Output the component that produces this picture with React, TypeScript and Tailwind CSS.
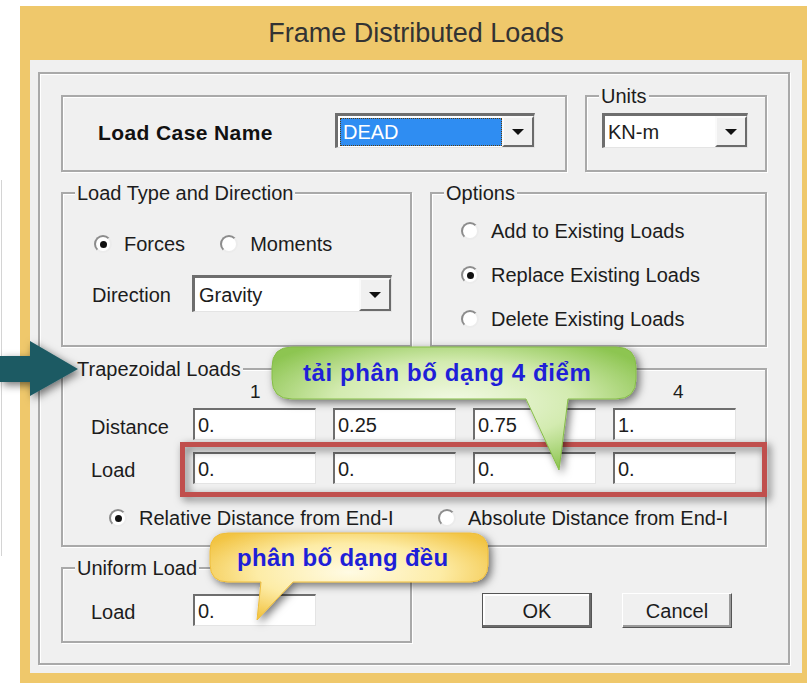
import React from 'react';

// classic sunken edit box
const Field: React.FC<{ value: string }> = ({ value }) => (
  <div className="w-[123px] h-[32px] bg-white border-t-2 border-l-2 border-r border-b border-t-[#6e6e6e] border-l-[#6e6e6e] border-r-[#e4e4e4] border-b-[#e4e4e4] flex items-center pl-[3px] text-[20px] leading-none">
    {value}
  </div>
);

const DropButton: React.FC = () => (
  <div className="w-[32px] h-full shrink-0 bg-[#f0f0f0] border-2 border-t-[#fafafa] border-l-[#fafafa] border-r-[#6b6b6b] border-b-[#6b6b6b] flex items-center justify-center">
    <span className="w-0 h-0 border-l-[6px] border-r-[6px] border-t-[6px] border-l-transparent border-r-transparent border-t-[#111]" />
  </div>
);

const Combo: React.FC<{ className: string; children: React.ReactNode }> = ({ className, children }) => (
  <div className={`bg-white border-t-[3px] border-l-[3px] border-r border-b border-t-[#6e6e6e] border-l-[#6e6e6e] border-r-[#e4e4e4] border-b-[#e4e4e4] flex ${className}`}>
    <div className="flex-1 flex items-center min-w-0">{children}</div>
    <DropButton />
  </div>
);

const Radio: React.FC<{ checked?: boolean }> = ({ checked }) => (
  <span className="w-[18px] h-[18px] shrink-0 rounded-full bg-white border-2 border-t-[#8c8c8c] border-l-[#8c8c8c] border-r-[#ececec] border-b-[#ececec] flex items-center justify-center">
    {checked && <span className="w-[7px] h-[7px] rounded-full bg-[#111]" />}
  </span>
);

const Option: React.FC<{ label: string; checked?: boolean; className?: string }> = ({ label, checked, className = '' }) => (
  <div className={`flex items-center gap-[12px] h-[24px] ${className}`}>
    <Radio checked={checked} />
    <span>{label}</span>
  </div>
);

const GroupBox: React.FC<{ label: string; className: string; children: React.ReactNode }> = ({ label, className, children }) => (
  <div className={`border-2 border-[#a9a9a9] shadow-[inset_1px_1px_0_#fff,1px_1px_0_#fff] ${className}`}>
    <span className="block w-fit -mt-[12px] ml-[12px] px-[2px] bg-[#f0f0f0] leading-[22px]">{label}</span>
    {children}
  </div>
);

const distances = ['0.', '0.25', '0.75', '1.'];
const loads = ['0.', '0.', '0.', '0.'];
// point numbers 2 and 3 sit under the note bubble
const headers = ['1', '', '', '4'];

const App: React.FC = () => {
  return (
    <div className="relative w-[807px] h-[683px] bg-white overflow-hidden font-['Liberation_Sans',Arial,sans-serif] text-[#1c1c1c]">
      <div className="absolute left-[1px] top-[180px] w-[1px] h-[376px] bg-[#d4d4d4]" />

      <div className="pl-[20px] pt-[6px]">
        <div className="w-[787px] h-[677px] bg-[#efc86b] pl-[10px] pr-[5px] pb-[10px] flex flex-col">
          <div className="h-[54px] flex items-center justify-center text-[27px] text-[#333]">Frame Distributed Loads</div>

          <div className="flex-1 flex bg-[#f0f0f0] pt-[12px] pl-[8px] pr-[12px] pb-[8px]">
            <div className="flex-1 flex flex-col border-2 border-[#a9a9a9] shadow-[inset_1px_1px_0_#fff,1px_1px_0_#fff] pl-[21px] pt-[21px] text-[20px] leading-[22px]">
              {/* load case + units */}
              <div className="flex gap-[18px]">
                <div className="w-[506px] h-[77px] flex items-start border-2 border-[#a9a9a9] shadow-[inset_1px_1px_0_#fff,1px_1px_0_#fff]">
                  <span className="ml-[35px] mt-[25px] font-bold text-[21px] tracking-[0.4px] text-[#111]">Load Case Name</span>
                  <Combo className="ml-auto mr-[30px] mt-[16px] w-[200px] h-[35px]">
                    <div className="ml-[2px] h-[28px] w-full flex items-center bg-[#2f8df2] border border-dotted border-[#5a3d10] text-white pl-[2px]">DEAD</div>
                  </Combo>
                </div>
                <GroupBox label="Units" className="w-[182px] h-[77px]">
                  <Combo className="mt-[6px] ml-[15px] w-[146px] h-[35px]">
                    <span className="pl-[3px]">KN-m</span>
                  </Combo>
                </GroupBox>
              </div>

              {/* load type + options */}
              <div className="flex gap-[18px] mt-[20px]">
                <GroupBox label="Load Type and Direction" className="w-[351px] h-[155px]">
                  <div className="flex mt-[28px] ml-[31px]">
                    <Option label="Forces" checked />
                    <Option label="Moments" className="ml-[35px]" />
                  </div>
                  <div className="flex items-center mt-[19px]">
                    <span className="w-[129px] pl-[29px] pt-[2px]">Direction</span>
                    <Combo className="w-[200px] h-[37px]">
                      <span className="pl-[4px]">Gravity</span>
                    </Combo>
                  </div>
                </GroupBox>
                <GroupBox label="Options" className="w-[337px] h-[155px]">
                  <div className="flex flex-col gap-[20px] mt-[15px] ml-[29px]">
                    <Option label="Add to Existing Loads" />
                    <Option label="Replace Existing Loads" checked />
                    <Option label="Delete Existing Loads" />
                  </div>
                </GroupBox>
              </div>

              {/* trapezoidal */}
              <GroupBox label="Trapezoidal Loads" className="w-[706px] h-[179px] mt-[21px]">
                <div className="flex gap-[17px] ml-[130px] mt-[1px] h-[22px]">
                  {headers.map((n, i) => (
                    <span key={i} className={`w-[123px] text-[19px] ${i === 3 ? 'pl-[60px]' : 'pl-[57px]'}`}>{n}</span>
                  ))}
                </div>
                <div className="flex items-center mt-[5px]">
                  <span className="w-[130px] pl-[28px] pt-[6px]">Distance</span>
                  <div className="flex gap-[17px]">
                    {distances.map((d, i) => <Field key={i} value={d} />)}
                  </div>
                </div>
                <div className="flex items-center mt-[12px]">
                  <span className="w-[130px] pl-[28px] pt-[4px]">Load</span>
                  <div className="flex gap-[17px]">
                    {loads.map((d, i) => <Field key={i} value={d} />)}
                  </div>
                </div>
                <div className="flex mt-[22px] ml-[46px]">
                  <Option label="Relative Distance from End-I" checked className="w-[329px]" />
                  <Option label="Absolute Distance from End-I" />
                </div>
              </GroupBox>

              {/* uniform + buttons */}
              <div className="flex items-start mt-[20px]">
                <GroupBox label="Uniform Load" className="w-[351px] h-[76px]">
                  <div className="flex items-center mt-[15px]">
                    <span className="w-[130px] pl-[28px] pt-[3px]">Load</span>
                    <Field value="0." />
                  </div>
                </GroupBox>
                <div className="flex gap-[30px] ml-[70px] mt-[26px]">
                  <button className="w-[110px] h-[35px] bg-[#f0f0f0] border border-[#555] shadow-[inset_-2px_-2px_0_#6b6b6b,inset_2px_2px_0_#fff] flex items-center justify-center">OK</button>
                  <button className="w-[110px] h-[35px] bg-[#f0f0f0] border border-t-[#fff] border-l-[#fff] border-r-[#555] border-b-[#555] shadow-[inset_-2px_-2px_0_#9a9a9a] flex items-center justify-center">Cancel</button>
                </div>
              </div>
            </div>
          </div>
        </div>
      </div>

      {/* notes drawn over the dialog */}
      <svg className="absolute inset-0 pointer-events-none" width="807" height="683" viewBox="0 0 807 683">
        <defs>
          <filter id="sh" x="-20%" y="-40%" width="140%" height="180%">
            <feDropShadow dx="3" dy="3" stdDeviation="4" floodColor="#000" floodOpacity="0.55" />
          </filter>
          <radialGradient id="green" cx="50%" cy="45%" r="60%">
            <stop offset="0%" stopColor="#f3fae6" />
            <stop offset="55%" stopColor="#d3ebb0" />
            <stop offset="100%" stopColor="#8dc551" />
          </radialGradient>
          <radialGradient id="yellow" cx="50%" cy="45%" r="60%">
            <stop offset="0%" stopColor="#fffbe4" />
            <stop offset="55%" stopColor="#fdeca6" />
            <stop offset="100%" stopColor="#f2c443" />
          </radialGradient>
        </defs>

        <path d="M0 356 H30 V341 L78 369 L30 396 V382 H0 Z" fill="#1f5a63" filter="url(#sh)" />

        <rect x="182.5" y="444.5" width="582" height="50" fill="none" stroke="#c0504d" strokeWidth="5" filter="url(#sh)" />

        <path
          d="M292 347 H616 Q636 347 636 367 V379 Q636 399 616 399 H568 L559 470 L526 399 H292 Q272 399 272 379 V367 Q272 347 292 347 Z"
          fill="url(#green)"
          stroke="#86bd48"
          strokeWidth="1"
          filter="url(#sh)"
        />
        <path
          d="M228 533 H470 Q488 533 488 551 V564 Q488 582 470 582 H293 L257 620 L261 582 H228 Q210 582 210 564 V551 Q210 533 228 533 Z"
          fill="url(#yellow)"
          stroke="#eebd3c"
          strokeWidth="1"
          filter="url(#sh)"
        />
      </svg>

      <span className="absolute left-[303px] top-[359px] text-[24px] leading-[28px] font-bold tracking-[0.6px] text-[#1f1fd8]">tải phân bố dạng 4 điểm</span>
      <span className="absolute left-[237px] top-[544px] text-[24px] leading-[28px] font-bold tracking-[0.3px] text-[#1f1fd8]">phân bố dạng đều</span>
    </div>
  );
};

export default App;
